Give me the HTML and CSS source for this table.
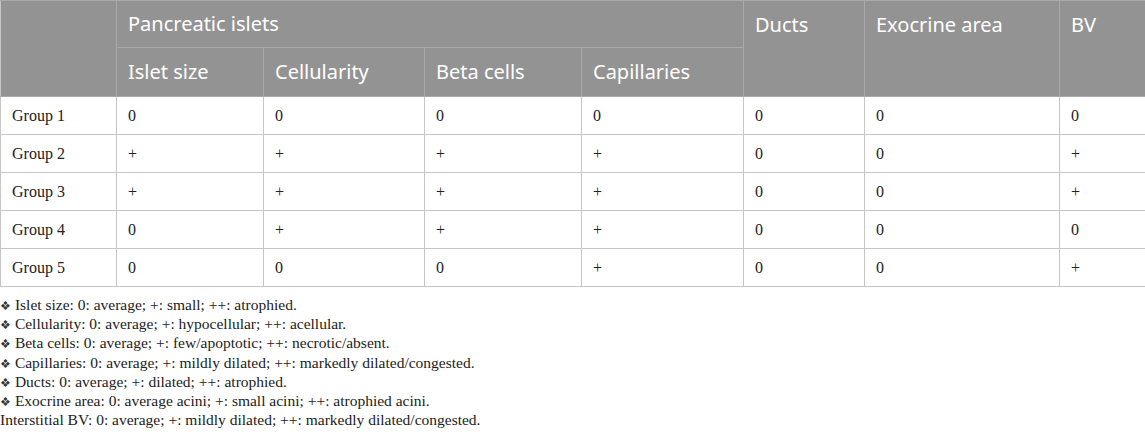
FILE: index.html
```html
<!DOCTYPE html>
<html>
<head>
<meta charset="utf-8">
<link rel="stylesheet" href="styles.css">
</head>
<body>
<table class="data">
  <colgroup>
    <col class="c1"><col class="c2"><col class="c3"><col class="c4"><col class="c5"><col class="c6"><col class="c7"><col class="c8">
  </colgroup>
  <thead>
    <tr class="h1">
      <th rowspan="2"></th>
      <th colspan="4">Pancreatic islets</th>
      <th rowspan="2" class="top">Ducts</th>
      <th rowspan="2" class="top">Exocrine area</th>
      <th rowspan="2" class="top">BV</th>
    </tr>
    <tr class="h2">
      <th>Islet size</th>
      <th>Cellularity</th>
      <th>Beta cells</th>
      <th>Capillaries</th>
    </tr>
  </thead>
  <tbody>
    <tr><td>Group 1</td><td>0</td><td>0</td><td>0</td><td>0</td><td>0</td><td>0</td><td>0</td></tr>
    <tr><td>Group 2</td><td>+</td><td>+</td><td>+</td><td>+</td><td>0</td><td>0</td><td>+</td></tr>
    <tr><td>Group 3</td><td>+</td><td>+</td><td>+</td><td>+</td><td>0</td><td>0</td><td>+</td></tr>
    <tr><td>Group 4</td><td>0</td><td>+</td><td>+</td><td>+</td><td>0</td><td>0</td><td>0</td></tr>
    <tr><td>Group 5</td><td>0</td><td>0</td><td>0</td><td>+</td><td>0</td><td>0</td><td>+</td></tr>
  </tbody>
</table>
<div class="notes">
  <p><span class="mark">❖</span> Islet size: 0: average; +: small; ++: atrophied.</p>
  <p><span class="mark">❖</span> Cellularity: 0: average; +: hypocellular; ++: acellular.</p>
  <p><span class="mark">❖</span> Beta cells: 0: average; +: few/apoptotic; ++: necrotic/absent.</p>
  <p><span class="mark">❖</span> Capillaries: 0: average; +: mildly dilated; ++: markedly dilated/congested.</p>
  <p><span class="mark">❖</span> Ducts: 0: average; +: dilated; ++: atrophied.</p>
  <p><span class="mark">❖</span> Exocrine area: 0: average acini; +: small acini; ++: atrophied acini.</p>
  <p>Interstitial BV: 0: average; +: mildly dilated; ++: markedly dilated/congested.</p>
</div>
</body>
</html>
```
FILE: styles.css
```css
html, body {
  margin: 0;
  padding: 0;
  background: #ffffff;
}
.data {
  border-collapse: collapse;
  table-layout: fixed;
  width: 1145px;
}
.c1 { width: 116px; }
.c2 { width: 147px; }
.c3 { width: 161px; }
.c4 { width: 157px; }
.c5 { width: 162px; }
.c6 { width: 121px; }
.c7 { width: 195px; }
.c8 { width: 86px; }

.data th {
  background: #939393;
  color: #ffffff;
  font-family: "Noto Sans", "Open Sans", sans-serif;
  font-weight: normal;
  font-size: 20px;
  line-height: 26px;
  text-align: left;
  padding: 0 11px;
  border: 1px solid #a9a9a9;
  vertical-align: middle;
}
.data th.top {
  vertical-align: top;
  padding-top: 11px;
}
.data tr.h1 th { height: 46px; }
.data tr.h2 th { height: 48px; }
.data thead tr.h1 th:first-child { border-left-color: #c6c6c6; }
.data td {
  font-family: "Liberation Serif", "Times New Roman", serif;
  font-size: 16px;
  color: #222222;
  height: 37px;
  padding: 0 11px;
  border: 1px solid #c6c6c6;
  vertical-align: middle;
}
.notes {
  font-family: "Liberation Serif", "Times New Roman", serif;
  font-size: 15.5px;
  color: #222222;
  padding-top: 8px;
}
.notes p {
  margin: 0;
  height: 19.2px;
  line-height: 19.2px;
}
.mark {
  font-size: 12px;
  line-height: 0;
  color: #333333;
}
```
